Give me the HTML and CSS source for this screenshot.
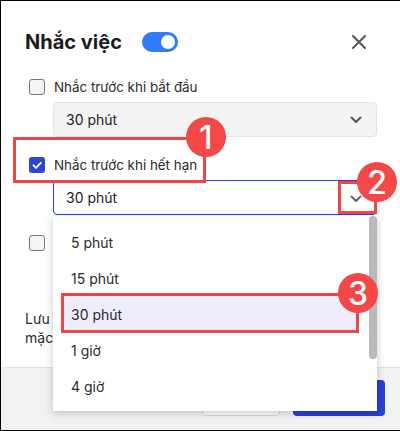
FILE: index.html
```html
<!DOCTYPE html>
<html lang="vi">
<head>
    <meta charset="UTF-8">
    <meta name="viewport" content="width=device-width, initial-scale=1.0">
    <title>Nhắc việc</title>
    <link rel="stylesheet" href="styles.css">
</head>
<body>
    <div class="dialog">
        <div class="dialog-body">
            <div class="header">
                <h1 class="title">Nhắc việc</h1>
                <span class="toggle"><span class="knob"></span></span>
                <button class="close" type="button">
                    <svg width="14" height="14" viewBox="0 0 14 14"><path d="M1 1L13 13M13 1L1 13" stroke="#555" stroke-width="2" stroke-linecap="round"/></svg>
                </button>
            </div>

            <div class="option">
                <label class="check-row"><span class="box"></span>Nhắc trước khi bắt đầu</label>
                <div class="select">
                    <span>30 phút</span>
                    <svg class="chevron" width="12" height="8" viewBox="0 0 12 8"><path d="M1.5 1.5L6 6L10.5 1.5" fill="none" stroke="#555" stroke-width="2" stroke-linecap="round" stroke-linejoin="round"/></svg>
                </div>
            </div>

            <div class="option">
                <label class="check-row"><span class="box checked">
                    <svg width="16" height="16" viewBox="0 0 16 16"><path d="M4.5 8.3L7 10.8L11.8 5.8" fill="none" stroke="#fff" stroke-width="1.8" stroke-linecap="round" stroke-linejoin="round"/></svg>
                </span>Nhắc trước khi hết hạn</label>
                <div class="select open">
                    <span>30 phút</span>
                    <svg class="chevron" width="12" height="8" viewBox="0 0 12 8"><path d="M1.5 1.5L6 6L10.5 1.5" fill="none" stroke="#666" stroke-width="2" stroke-linecap="round" stroke-linejoin="round"/></svg>
                    <ul class="menu">
                        <li>5 phút</li>
                        <li>15 phút</li>
                        <li class="active">30 phút</li>
                        <li>1 giờ</li>
                        <li>4 giờ</li>
                    </ul>
                    <span class="scrollbar"></span>
                </div>
            </div>

            <div class="option">
                <label class="check-row"><span class="box"></span>Nhắc khi quá hạn</label>
                <div class="select">
                    <span>30 phút</span>
                </div>
            </div>

            <p class="note">Lưu ý: Thời gian nhắc sẽ được áp dụng theo cài đặt<br>mặc định của hệ thống.</p>
        </div>

        <div class="footer">
            <button class="btn" type="button">Hủy</button>
            <button class="btn primary" type="button">Lưu</button>
        </div>

        <!-- highlight marks -->
        <span class="mark mark-1"></span>
        <span class="mark mark-2"></span>
        <span class="mark mark-3"></span>
        <span class="badge badge-1">1</span>
        <span class="badge badge-2">2</span>
        <span class="badge badge-3">3</span>
    </div>
</body>
</html>
```

FILE: styles.css
```css
body {
    margin: 0;
    font-family: Inter, "Noto Sans", sans-serif;
    color: #222;
    border-top: 1px solid #000;
    border-left: 1px solid #000;
    border-bottom: 1px solid #000;
    overflow: hidden;
}
.dialog {
    position: relative;
    height: 429px;
    display: flex;
    flex-direction: column;
    background: #fff;
}
.dialog-body {
    padding: 23px 23px 20px 24px;
}
.header {
    display: flex;
    align-items: center;
    height: 36px;
    margin-bottom: 12px;
}
.title {
    margin: 0;
    font-size: 20px;
    font-weight: 700;
    color: #1c1c1c;
}
.toggle {
    display: flex;
    align-items: center;
    justify-content: flex-end;
    width: 36px;
    height: 20px;
    margin-left: 20px;
    padding: 0 3px;
    box-sizing: border-box;
    border-radius: 10px;
    background: #2f7cf6;
}
.knob {
    width: 14px;
    height: 14px;
    border-radius: 50%;
    background: #fff;
}
.close {
    display: flex;
    align-items: center;
    justify-content: center;
    width: 24px;
    height: 24px;
    margin-left: auto;
    margin-right: 6px;
    padding: 0;
    border: none;
    background: none;
}
.option {
    margin-bottom: 13px;
}
.check-row {
    display: flex;
    align-items: center;
    height: 30px;
    padding-left: 4px;
    font-size: 13.4px;
    color: #2a2a2a;
}
.box {
    display: flex;
    width: 16px;
    height: 16px;
    margin-right: 9px;
    box-sizing: border-box;
    border: 1.5px solid #777;
    border-radius: 3px;
    background: #f4f4f4;
}
.box.checked {
    border: none;
    background: #2d44db;
}
.select {
    position: relative;
    display: flex;
    align-items: center;
    justify-content: space-between;
    height: 35px;
    margin-left: 28px;
    padding: 0 14px 0 12px;
    box-sizing: border-box;
    border: 1px solid #e4e4e4;
    border-radius: 4px;
    background: #f3f3f3;
    font-size: 14px;
}
.select.open {
    border-color: #2c40d8;
    background: #fff;
}
.select.open .chevron {
    margin-top: 2px;
}
.menu {
    position: absolute;
    top: 35px;
    left: -1px;
    z-index: 2;
    width: 324px;
    height: 195px;
    margin: 0;
    padding: 8px 0 7px;
    box-sizing: border-box;
    list-style: none;
    background: #fff;
    box-shadow: 0 2px 8px rgba(0, 0, 0, 0.22);
}
.menu li {
    display: flex;
    align-items: center;
    height: 36px;
    margin: 0 19px 0 8px;
    padding-left: 10px;
    font-size: 14px;
    color: #2a2a2a;
}
.menu li.active {
    background: #ededfb;
}
.scrollbar {
    position: absolute;
    top: 35px;
    right: -1px;
    z-index: 3;
    width: 8px;
    height: 143px;
    border-radius: 4px;
    background: #b9b9b9;
}
.note {
    margin: 16px 0 0;
    font-size: 14px;
    line-height: 19px;
    color: #2a2a2a;
}
.footer {
    flex: 1;
    display: flex;
    justify-content: flex-end;
    align-items: flex-start;
    gap: 13px;
    padding: 12px 15px 0 0;
    border-top: 1px solid #e2e2e2;
    background: #f2f2f2;
}
.btn {
    width: 78px;
    height: 36px;
    border: 1px solid #d8d8d8;
    border-radius: 4px;
    background: #fff;
    font-family: inherit;
    font-size: 14px;
}
.btn.primary {
    width: 92px;
    border: none;
    background: #2c3fd8;
    color: #fff;
}
.mark {
    position: absolute;
    z-index: 4;
    box-sizing: border-box;
    border: 3px solid #f04545;
}
.mark-1 {
    left: 12px;
    top: 136px;
    width: 193px;
    height: 46px;
}
.mark-2 {
    left: 337px;
    top: 180px;
    width: 39px;
    height: 33px;
}
.mark-3 {
    left: 60px;
    top: 292px;
    width: 298px;
    height: 40px;
}
.badge {
    position: absolute;
    z-index: 5;
    display: flex;
    align-items: center;
    justify-content: center;
    width: 40px;
    height: 40px;
    border-radius: 50%;
    background: #f44848;
    color: #fff;
    font-size: 32px;
    font-weight: 500;
}
.badge-1 {
    left: 185px;
    top: 116px;
}
.badge-2 {
    left: 356px;
    top: 161px;
}
.badge-3 {
    left: 337px;
    top: 272px;
}
```
